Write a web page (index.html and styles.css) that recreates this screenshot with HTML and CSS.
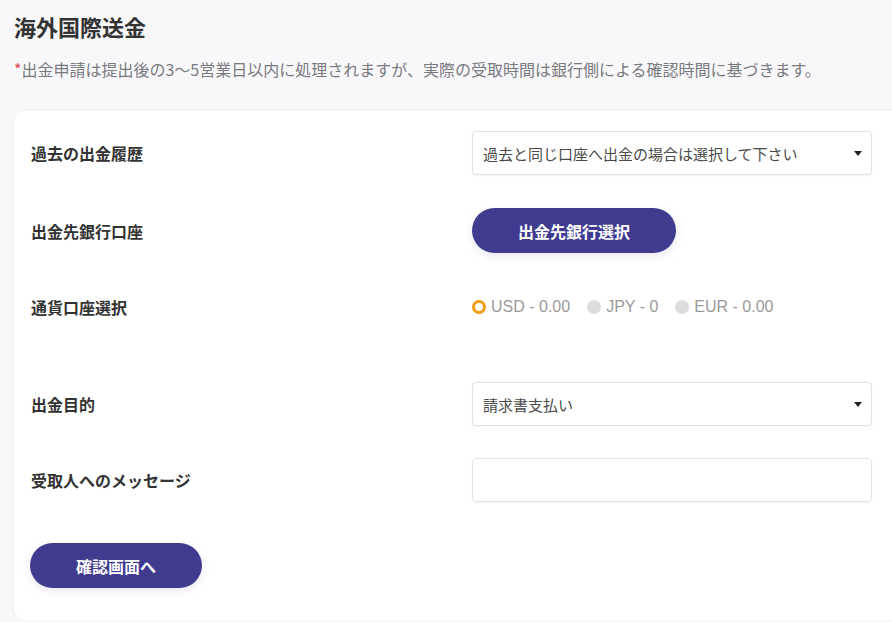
FILE: index.html
```html
<!DOCTYPE html>
<html lang="ja">
<head>
<meta charset="utf-8">
<title>海外国際送金</title>
<link rel="stylesheet" href="styles.css">
</head>
<body>
<div class="page">
  <h1 class="title">海外国際送金</h1>
  <p class="notice"><span class="star">*</span>出金申請は提出後の3〜5営業日以内に処理されますが、実際の受取時間は銀行側による確認時間に基づきます。</p>
  <div class="card">
    <div class="row">
      <div class="label">過去の出金履歴</div>
      <div class="select">
        <span>過去と同じ口座へ出金の場合は選択して下さい</span>
        <svg class="caret" width="8" height="5" viewBox="0 0 8 5"><path d="M0 0H8L4 5Z" fill="#222"/></svg>
      </div>
    </div>
    <div class="row">
      <div class="label">出金先銀行口座</div>
      <div><button class="btn btn-bank">出金先銀行選択</button></div>
    </div>
    <div class="row row-tall">
      <div class="label">通貨口座選択</div>
      <div class="radios">
        <label class="radio"><span class="dot dot-on"></span>USD - 0.00</label>
        <label class="radio"><span class="dot"></span>JPY - 0</label>
        <label class="radio"><span class="dot"></span>EUR - 0.00</label>
      </div>
    </div>
    <div class="row row-tight">
      <div class="label">出金目的</div>
      <div class="select">
        <span>請求書支払い</span>
        <svg class="caret" width="8" height="5" viewBox="0 0 8 5"><path d="M0 0H8L4 5Z" fill="#222"/></svg>
      </div>
    </div>
    <div class="row">
      <div class="label">受取人へのメッセージ</div>
      <div class="input"></div>
    </div>
    <div class="actions">
      <button class="btn btn-confirm">確認画面へ</button>
    </div>
  </div>
</div>
</body>
</html>
```

FILE: styles.css
```css
html, body {
  margin: 0;
  padding: 0;
  overflow: hidden;
  background: #f8f8fa;
}
body {
  font-family: "Noto Sans CJK JP", "Liberation Sans", sans-serif;
  color: #333;
}
.page {
  padding: 11px 0 0 14px;
}
.title {
  margin: 0;
  font-size: 22px;
  line-height: 30px;
  font-weight: 700;
  color: #333;
}
.notice {
  margin: 16px 0 0;
  font-size: 16px;
  line-height: 24px;
  color: #7a7a80;
  white-space: nowrap;
}
.star {
  color: #d9414e;
}
.card {
  margin-top: 30px;
  width: 900px;
  box-sizing: border-box;
  background: #fff;
  border-radius: 12px;
  box-shadow: 0 0 6px rgba(0, 0, 0, 0.04);
  padding: 20px 17px 32px 17px;
}
.row {
  display: grid;
  grid-template-columns: 441px 400px;
  align-items: center;
  margin-bottom: 33px;
}
.row-tight {
  margin-bottom: 32px;
}
.row-tall {
  height: 63px;
  align-items: start;
  margin-bottom: 33px;
}
.row-tall .label,
.row-tall .radios {
  height: 42px;
  display: flex;
  align-items: center;
}
.label {
  font-size: 16px;
  font-weight: 700;
  color: #333;
  line-height: 24px;
}
.select {
  height: 44px;
  box-sizing: border-box;
  border: 1px solid #e2e2e4;
  border-radius: 4px;
  box-shadow: 0 1px 2px rgba(0, 0, 0, 0.04);
  padding: 0 9px 0 10px;
  display: flex;
  align-items: center;
  justify-content: space-between;
  font-size: 15px;
  color: #4a4a4a;
  background: #fff;
}
.caret {
  display: block;
}
.input {
  height: 44px;
  box-sizing: border-box;
  border: 1px solid #e2e2e4;
  border-radius: 4px;
  box-shadow: 0 1px 2px rgba(0, 0, 0, 0.04);
  background: #fff;
}
.btn {
  display: block;
  border: none;
  border-radius: 23px;
  background: #413b8f;
  color: #fff;
  font-family: "Noto Sans CJK JP", "Liberation Sans", sans-serif;
  font-size: 16px;
  font-weight: 700;
  height: 45px;
  padding: 0;
  box-shadow: 0 3px 8px rgba(65, 59, 143, 0.12);
}
.btn-bank {
  width: 204px;
}
.btn-confirm {
  width: 172px;
  margin-left: -1px;
}
.actions {
  padding-top: 8px;
}
.radios {
  gap: 17px;
}
.radio {
  display: flex;
  align-items: center;
  gap: 5px;
  font-family: "Liberation Sans", sans-serif;
  font-size: 16px;
  color: #9a9a9a;
}
.dot {
  width: 14px;
  height: 14px;
  box-sizing: border-box;
  border-radius: 50%;
  background: #dcdcdc;
}
.dot-on {
  background: #fff;
  border: 3px solid #f39c12;
}
```
